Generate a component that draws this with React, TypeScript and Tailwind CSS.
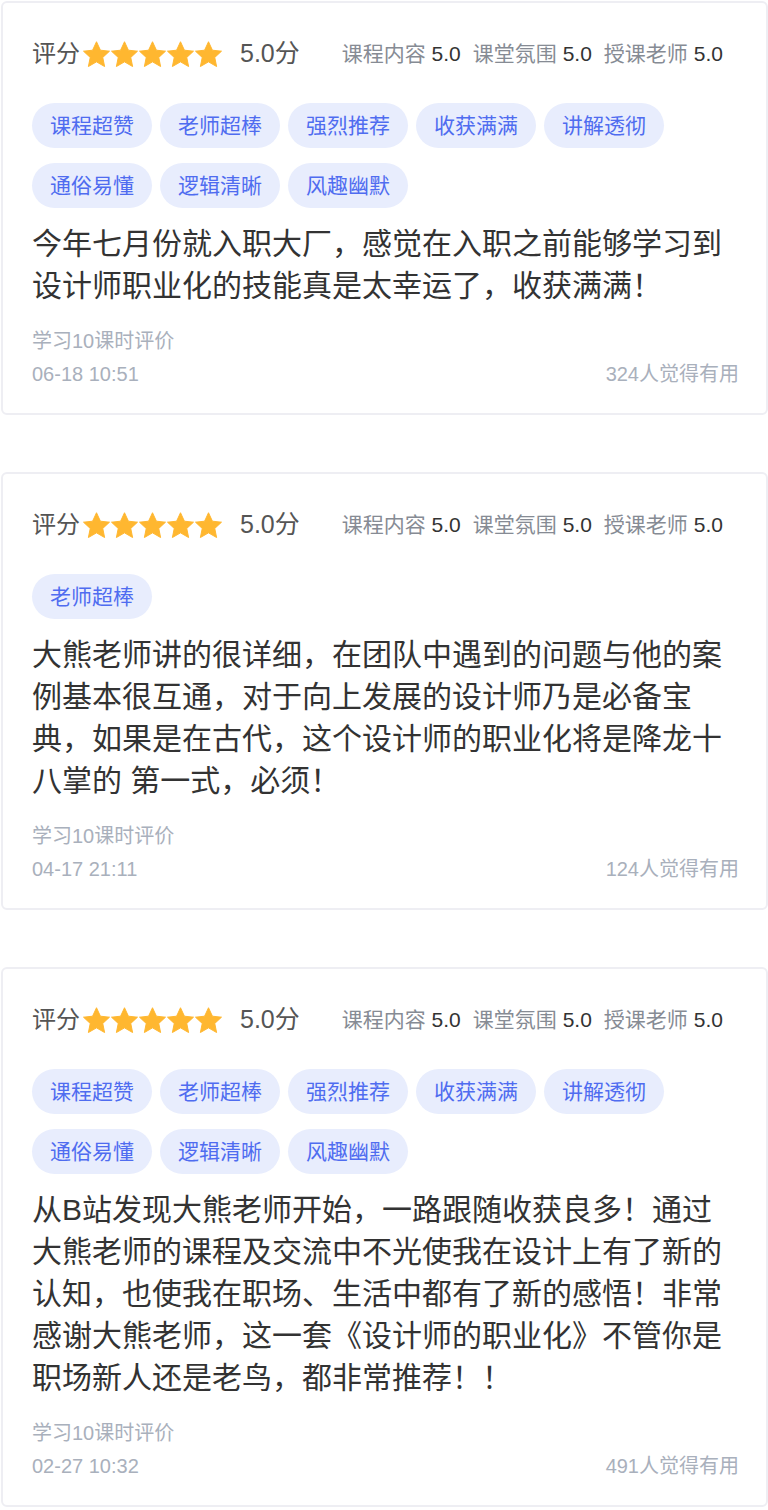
import React from 'react';

type Review = {
  tags: string[];
  content: string;
  date: string;
  useful: number;
};

const reviews: Review[] = [
  {
    tags: ['课程超赞', '老师超棒', '强烈推荐', '收获满满', '讲解透彻', '通俗易懂', '逻辑清晰', '风趣幽默'],
    content: '今年七月份就入职大厂，感觉在入职之前能够学习到设计师职业化的技能真是太幸运了，收获满满！',
    date: '06-18 10:51',
    useful: 324,
  },
  {
    tags: ['老师超棒'],
    content:
      '大熊老师讲的很详细，在团队中遇到的问题与他的案例基本很互通，对于向上发展的设计师乃是必备宝典，如果是在古代，这个设计师的职业化将是降龙十八掌的 第一式，必须！',
    date: '04-17 21:11',
    useful: 124,
  },
  {
    tags: ['课程超赞', '老师超棒', '强烈推荐', '收获满满', '讲解透彻', '通俗易懂', '逻辑清晰', '风趣幽默'],
    content:
      '从B站发现大熊老师开始，一路跟随收获良多！通过大熊老师的课程及交流中不光使我在设计上有了新的认知，也使我在职场、生活中都有了新的感悟！非常感谢大熊老师，这一套《设计师的职业化》不管你是职场新人还是老鸟，都非常推荐！！',
    date: '02-27 10:32',
    useful: 491,
  },
];

function Star() {
  return (
    <svg width="27" height="27" viewBox="1 1 22 22" className="shrink-0">
      <path
        d="M12 1.6l3.2 6.9 7.4.8-5.5 5.1 1.5 7.4L12 18l-6.6 3.8 1.5-7.4L1.4 9.3l7.4-.8z"
        fill="#FFB730"
        stroke="#FFB730"
        strokeWidth="0.8"
        strokeLinejoin="round"
      />
    </svg>
  );
}

function ReviewCard({ review }: { review: Review }) {
  return (
    <div className="border-2 border-[#eeeef3] rounded-md bg-white pl-[29px] pr-[27px] pt-[31px] pb-[22px]">
      {/* header */}
      <div className="flex items-center h-[40px]">
        <span className="text-[24px] text-[#555]">评分</span>
        <div className="flex items-center gap-[1px] ml-[3px]">
          {[0, 1, 2, 3, 4].map((i) => (
            <Star key={i} />
          ))}
        </div>
        <span className="text-[25px] text-[#555] ml-[18px]">5.0分</span>
        <div className="flex items-center gap-[12px] ml-[42px] text-[21px]">
          <span className="text-[#868b94]">
            课程内容 <span className="text-[#333]">5.0</span>
          </span>
          <span className="text-[#868b94]">
            课堂氛围 <span className="text-[#333]">5.0</span>
          </span>
          <span className="text-[#868b94]">
            授课老师 <span className="text-[#333]">5.0</span>
          </span>
        </div>
      </div>

      {/* tags */}
      <div className="flex flex-wrap gap-x-[8px] gap-y-[15px] mt-[29px]">
        {review.tags.map((t) => (
          <span
            key={t}
            className="h-[45px] px-[18px] rounded-full bg-[#e8edfd] text-[#4f6cf0] text-[21px] flex items-center"
          >
            {t}
          </span>
        ))}
      </div>

      {/* content */}
      <p className="mt-[15px] text-[30px] leading-[42px] text-[#333]">{review.content}</p>

      {/* footer */}
      <div className="mt-[18px] text-[20px] leading-[33px] text-[#a9b0bc]">
        <div>学习10课时评价</div>
        <div className="flex justify-between">
          <span>{review.date}</span>
          <span>{review.useful}人觉得有用</span>
        </div>
      </div>
    </div>
  );
}

export default function App() {
  return (
    <div
      className="w-[768px] min-h-[1510px] bg-white pl-px pt-px flex flex-col gap-[57px]"
      style={{ fontFamily: '"Liberation Sans", "Noto Sans CJK SC", sans-serif' }}
    >
      {reviews.map((r, i) => (
        <ReviewCard key={i} review={r} />
      ))}
    </div>
  );
}
